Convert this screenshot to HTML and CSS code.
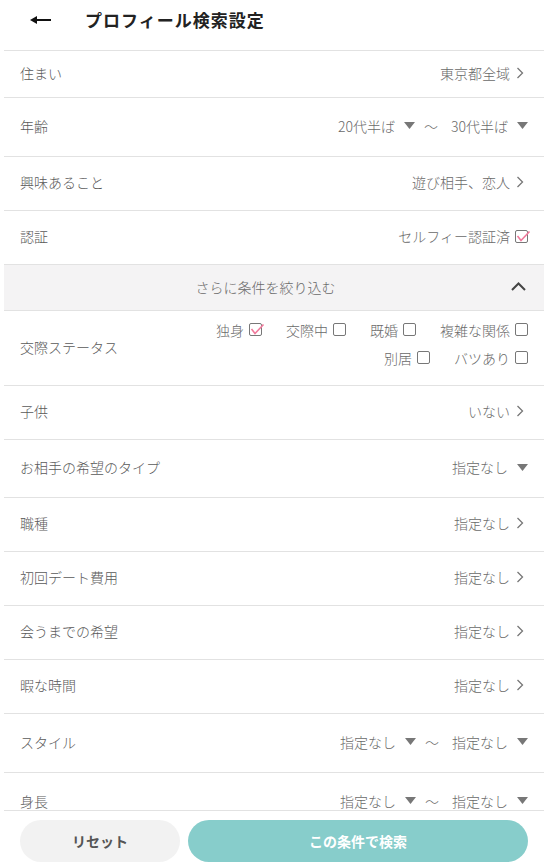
FILE: index.html
```html
<!DOCTYPE html>
<html lang="ja">
<head>
    <meta charset="UTF-8">
    <meta name="viewport" content="width=device-width, initial-scale=1.0">
    <title>プロフィール検索設定</title>
    <link rel="stylesheet" href="styles.css">
</head>
<body>
<div class="app">
    <header class="topbar">
        <button class="back" aria-label="戻る">
            <svg width="21" height="10" viewBox="0 0 21 10"><line x1="5" y1="5" x2="21" y2="5" stroke="#111" stroke-width="2"/><polygon points="0,5 7,1 7,9" fill="#111"/></svg>
        </button>
        <h1>プロフィール検索設定</h1>
    </header>

    <main class="list">
        <div class="row h46">
            <span class="label">住まい</span>
            <span class="value">東京都全域 <svg class="chev" width="8" height="12" viewBox="0 0 8 12"><polyline points="1.5,1 6.5,6 1.5,11" fill="none" stroke="#777" stroke-width="1.3"/></svg></span>
        </div>
        <div class="row h58">
            <span class="label">年齢</span>
            <span class="range">
                <span class="pick">20代半ば <svg class="tri" width="11" height="7" viewBox="0 0 11 7"><polygon points="0,0 11,0 5.5,7" fill="#777"/></svg></span>
                <span class="tilde">〜</span>
                <span class="pick">30代半ば <svg class="tri" width="11" height="7" viewBox="0 0 11 7"><polygon points="0,0 11,0 5.5,7" fill="#777"/></svg></span>
            </span>
        </div>
        <div class="row">
            <span class="label">興味あること</span>
            <span class="value">遊び相手、恋人 <svg class="chev" width="8" height="12" viewBox="0 0 8 12"><polyline points="1.5,1 6.5,6 1.5,11" fill="none" stroke="#777" stroke-width="1.3"/></svg></span>
        </div>
        <div class="row">
            <span class="label">認証</span>
            <span class="value">セルフィー認証済 <svg class="box" width="13" height="15" viewBox="0 0 13 15"><rect x="0.5" y="1.5" width="12" height="12" rx="1.5" fill="none" stroke="#777"/><polyline points="2.5,7 6,11.5 14.5,2.5" fill="none" stroke="#f07a9c" stroke-width="1.6"/></svg></span>
        </div>

        <div class="more">
            <span class="more-text">さらに条件を絞り込む</span>
            <svg width="15" height="9" viewBox="0 0 15 9"><polyline points="1,8 7.5,1.5 14,8" fill="none" stroke="#444" stroke-width="2"/></svg>
        </div>

        <div class="row h74">
            <span class="label">交際ステータス</span>
            <div class="checks">
                <div class="check-line">
                    <span class="check">独身 <svg class="box" width="13" height="15" viewBox="0 0 13 15"><rect x="0.5" y="1.5" width="12" height="12" rx="1.5" fill="none" stroke="#777"/><polyline points="2.5,7 6,11.5 14.5,2.5" fill="none" stroke="#f07a9c" stroke-width="1.6"/></svg></span>
                    <span class="check">交際中 <svg class="box" width="13" height="15" viewBox="0 0 13 15"><rect x="0.5" y="1.5" width="12" height="12" rx="1.5" fill="none" stroke="#777"/></svg></span>
                    <span class="check">既婚 <svg class="box" width="13" height="15" viewBox="0 0 13 15"><rect x="0.5" y="1.5" width="12" height="12" rx="1.5" fill="none" stroke="#777"/></svg></span>
                    <span class="check">複雑な関係 <svg class="box" width="13" height="15" viewBox="0 0 13 15"><rect x="0.5" y="1.5" width="12" height="12" rx="1.5" fill="none" stroke="#777"/></svg></span>
                </div>
                <div class="check-line">
                    <span class="check">別居 <svg class="box" width="13" height="15" viewBox="0 0 13 15"><rect x="0.5" y="1.5" width="12" height="12" rx="1.5" fill="none" stroke="#777"/></svg></span>
                    <span class="check">バツあり <svg class="box" width="13" height="15" viewBox="0 0 13 15"><rect x="0.5" y="1.5" width="12" height="12" rx="1.5" fill="none" stroke="#777"/></svg></span>
                </div>
            </div>
        </div>
        <div class="row">
            <span class="label">子供</span>
            <span class="value">いない <svg class="chev" width="8" height="12" viewBox="0 0 8 12"><polyline points="1.5,1 6.5,6 1.5,11" fill="none" stroke="#777" stroke-width="1.3"/></svg></span>
        </div>
        <div class="row h57">
            <span class="label">お相手の希望のタイプ</span>
            <span class="pick">指定なし <svg class="tri" width="11" height="7" viewBox="0 0 11 7"><polygon points="0,0 11,0 5.5,7" fill="#777"/></svg></span>
        </div>
        <div class="row">
            <span class="label">職種</span>
            <span class="value">指定なし <svg class="chev" width="8" height="12" viewBox="0 0 8 12"><polyline points="1.5,1 6.5,6 1.5,11" fill="none" stroke="#777" stroke-width="1.3"/></svg></span>
        </div>
        <div class="row">
            <span class="label">初回デート費用</span>
            <span class="value">指定なし <svg class="chev" width="8" height="12" viewBox="0 0 8 12"><polyline points="1.5,1 6.5,6 1.5,11" fill="none" stroke="#777" stroke-width="1.3"/></svg></span>
        </div>
        <div class="row">
            <span class="label">会うまでの希望</span>
            <span class="value">指定なし <svg class="chev" width="8" height="12" viewBox="0 0 8 12"><polyline points="1.5,1 6.5,6 1.5,11" fill="none" stroke="#777" stroke-width="1.3"/></svg></span>
        </div>
        <div class="row">
            <span class="label">暇な時間</span>
            <span class="value">指定なし <svg class="chev" width="8" height="12" viewBox="0 0 8 12"><polyline points="1.5,1 6.5,6 1.5,11" fill="none" stroke="#777" stroke-width="1.3"/></svg></span>
        </div>
        <div class="row h58">
            <span class="label">スタイル</span>
            <span class="range">
                <span class="pick">指定なし <svg class="tri" width="11" height="7" viewBox="0 0 11 7"><polygon points="0,0 11,0 5.5,7" fill="#777"/></svg></span>
                <span class="tilde">〜</span>
                <span class="pick">指定なし <svg class="tri" width="11" height="7" viewBox="0 0 11 7"><polygon points="0,0 11,0 5.5,7" fill="#777"/></svg></span>
            </span>
        </div>
        <div class="row h58">
            <span class="label">身長</span>
            <span class="range">
                <span class="pick">指定なし <svg class="tri" width="11" height="7" viewBox="0 0 11 7"><polygon points="0,0 11,0 5.5,7" fill="#777"/></svg></span>
                <span class="tilde">〜</span>
                <span class="pick">指定なし <svg class="tri" width="11" height="7" viewBox="0 0 11 7"><polygon points="0,0 11,0 5.5,7" fill="#777"/></svg></span>
            </span>
        </div>
    </main>

    <footer class="actions">
        <button class="btn reset">リセット</button>
        <button class="btn search">この条件で検索</button>
    </footer>
</div>
</body>
</html>
```

FILE: styles.css
```css
* { box-sizing: border-box; }
body { margin: 0; background: #fff; font-family: "Noto Sans CJK JP", "Noto Sans", sans-serif; color: #555; }
.app { margin: 0 8px 0 4px; height: 100vh; display: flex; flex-direction: column; }

.topbar { height: 51px; flex: none; display: flex; align-items: center; padding: 0 0 11px 26px; border-bottom: 1px solid #e2e2e2; }
.back { background: none; border: none; padding: 0; display: flex; cursor: pointer; }
.topbar h1 { margin: 0 0 0 34px; font-size: 17px; font-weight: bold; color: #222; letter-spacing: 1px; }

.list { flex: 1; overflow: hidden; }
.row { height: 54px; display: flex; align-items: center; justify-content: space-between; padding: 0 16px 3px; border-bottom: 1px solid #e2e2e2; font-size: 14px; font-weight: 300; }
.h46 { height: 47px; }
.h57 { height: 58px; }
.h58 { height: 59px; }
.h74 { height: 75px; }
.label { color: #5a5a5a; }
.value, .pick { display: flex; align-items: center; color: #6a6a6a; }
.chev { margin: 0 4px 0 6px; }
.tri { margin-left: 9px; }
.box { margin-left: 5px; overflow: visible; }
.range { display: flex; align-items: center; }
.tilde { margin: 0 13px 0 9px; color: #6a6a6a; }

.more { height: 46px; display: flex; align-items: center; padding: 0 18px 2px 16px; background: #f4f3f4; border-bottom: 1px solid #e2e2e2; font-size: 14px; font-weight: 300; color: #6a6a6a; }
.more-text { flex: 1; text-align: center; }

.checks { display: flex; flex-direction: column; align-items: flex-end; gap: 8px; padding-bottom: 6px; }
.check-line { display: flex; gap: 24px; }
.check { display: flex; align-items: center; color: #6a6a6a; }

.actions { flex: none; height: 57px; display: flex; gap: 8px; padding: 9px 16px 6px; border-top: 1px solid #e2e2e2; background: #fff; }
.btn { height: 42px; border: none; border-radius: 21px; font-family: inherit; font-size: 14px; font-weight: bold; cursor: pointer; }
.reset { width: 160px; background: #f2f2f2; color: #555; }
.search { flex: 1; background: #87cdcb; color: #fff; }
```
